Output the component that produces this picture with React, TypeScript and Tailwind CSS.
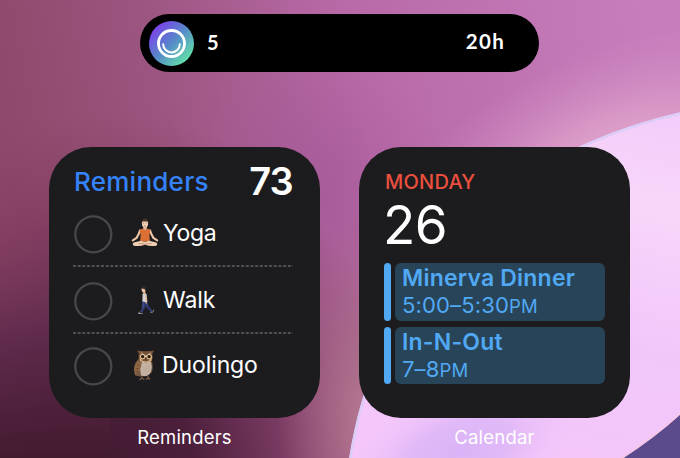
import type { ReactNode } from "react";

function Wallpaper() {
  return (
    <svg className="absolute inset-0 h-full w-full" viewBox="0 0 680 458" preserveAspectRatio="none" aria-hidden="true">
      <defs>
        <linearGradient id="base" gradientUnits="userSpaceOnUse" x1="0" y1="130" x2="640" y2="0">
          <stop offset="0" stopColor="#8e4869" />
          <stop offset="0.25" stopColor="#9c5580" />
          <stop offset="0.55" stopColor="#b869a7" />
          <stop offset="1" stopColor="#c67dbc" />
        </linearGradient>
        <radialGradient id="shade" gradientUnits="userSpaceOnUse" cx="0" cy="0" r="1" gradientTransform="translate(110 490) scale(300 380)">
          <stop offset="0" stopColor="#401a2e" />
          <stop offset="0.3" stopColor="#481d38" stopOpacity="0.95" />
          <stop offset="0.5" stopColor="#5f294b" stopOpacity="0.8" />
          <stop offset="0.75" stopColor="#783459" stopOpacity="0.5" />
          <stop offset="1" stopColor="#83405f" stopOpacity="0" />
        </radialGradient>
        <linearGradient id="corner" gradientUnits="userSpaceOnUse" x1="0" y1="458" x2="0" y2="230">
          <stop offset="0" stopColor="#431b2f" />
          <stop offset="0.5" stopColor="#5c284a" stopOpacity="0.75" />
          <stop offset="1" stopColor="#7f3d60" stopOpacity="0" />
        </linearGradient>
        <radialGradient id="pink" gradientUnits="userSpaceOnUse" cx="0" cy="0" r="1" gradientTransform="translate(620 165) rotate(-20) scale(230 120)">
          <stop offset="0" stopColor="#e6acd0" />
          <stop offset="0.4" stopColor="#dfa2cb" stopOpacity="0.75" />
          <stop offset="1" stopColor="#d18fc3" stopOpacity="0" />
        </radialGradient>
        <radialGradient id="violet" gradientUnits="userSpaceOnUse" cx="310" cy="190" r="140">
          <stop offset="0" stopColor="#a25698" stopOpacity="0.6" />
          <stop offset="1" stopColor="#a25698" stopOpacity="0" />
        </radialGradient>
        <radialGradient id="dusk" gradientUnits="userSpaceOnUse" cx="0" cy="0" r="1" gradientTransform="translate(368 420) scale(90 210)">
          <stop offset="0" stopColor="#b77a92" />
          <stop offset="0.4" stopColor="#a96d88" stopOpacity="0.75" />
          <stop offset="1" stopColor="#9d6085" stopOpacity="0" />
        </radialGradient>
        <linearGradient id="orb" gradientUnits="userSpaceOnUse" x1="640" y1="110" x2="560" y2="458">
          <stop offset="0" stopColor="#f3cdfa" />
          <stop offset="0.25" stopColor="#f8d6fa" />
          <stop offset="0.65" stopColor="#f1c7fa" />
          <stop offset="1" stopColor="#f4c6fa" />
        </linearGradient>
        <radialGradient id="lilac" gradientUnits="userSpaceOnUse" cx="0" cy="0" r="1" gradientTransform="translate(460 450) rotate(-20) scale(120 62)">
          <stop offset="0" stopColor="#d9b3f6" />
          <stop offset="0.45" stopColor="#dcb6f7" stopOpacity="0.8" />
          <stop offset="1" stopColor="#efc4fa" stopOpacity="0" />
        </radialGradient>
      </defs>
      <rect width="680" height="458" fill="url(#base)" />
      <rect width="680" height="458" fill="url(#violet)" />
      <rect width="680" height="458" fill="url(#pink)" />
      <rect width="680" height="458" fill="url(#shade)" />
      <rect width="110" height="458" fill="url(#corner)" />
      <rect width="680" height="458" fill="url(#dusk)" />
      <path d="M349 460C372 310 470 160 682 112V460Z" fill="url(#orb)" />
      <path d="M349 460C372 310 470 160 682 112V460Z" fill="url(#lilac)" />
      <path d="M350 460C373 310 471 161 682 113" fill="none" stroke="#dccdf8" strokeWidth="2.5" />
      <path d="M620 460Q655 438 682 413V460Z" fill="#5b4b8c" />
      <path d="M619 460Q654 438 682 412" fill="none" stroke="#f5c6e2" strokeWidth="1.500" />
    </svg>
  );
}

function YogaIcon() {
  return (
    <svg className="h-[30px] w-[30px]" viewBox="0 0 30 30" aria-hidden="true">
      <path d="M10 12.500Q8.500 17 6.600 19.800L2.800 22.300M20 12.500Q21.500 17 23.400 19.800L27.200 22.300" fill="none" stroke="#efc6a6" strokeWidth="2.200" strokeLinecap="round" strokeLinejoin="round" />
      <path d="M13.200 8h3.600v4h-3.600z" fill="#dcaf90" />
      <path d="M12.500 10.500 9.800 12q-.4 2 .8 4.600l-.4 6.900h9.600l-.4-6.900q1.200-2.600.8-4.600l-2.700-1.500Q15 13.500 12.500 10.500Z" fill="#dc7034" />
      <path d="M11 22.800 3.800 24.500q-2 1.800 0 3.200 6 1 11.200-1 5.200 2 11.200 1 2-1.400 0-3.200L19 22.800q-4 1.800-8 0Z" fill="#f1cfb3" />
      <path d="m8.500 25.400 6.500.8 6.500-.8" fill="none" stroke="#bd8866" strokeWidth=".8" />
      <ellipse cx="15" cy="5.500" rx="3.100" ry="4.100" fill="#f3d1b6" />
      <path d="M11.800 5Q11.300.5 15 .5T18.200 5l-.8-1.800q-2.400.4-4.800 0Z" fill="#443129" />
      <path d="M13.200 5.300h.9M15.900 5.300h.9M14.200 7.900h1.600" stroke="#77493c" strokeWidth=".6" />
    </svg>
  );
}

function WalkIcon() {
  return (
    <svg className="h-[30px] w-[30px]" viewBox="0 0 30 30" aria-hidden="true">
      <path d="M12.300 16h4.900l.8 4.300 4.600 5.500-1.700 1.400-5.200-5.600-.9 1.600-2.400 4.500-2-.8 1.300-4.300Z" fill="#30396f" />
      <path d="m13.300 18-.4 4.700M17 18.500l.5 2" stroke="#4957a0" strokeWidth=".9" fill="none" />
      <path d="m10 27-1.800 1.500h4M20.800 27.300l1.900-.1 1-2" fill="none" stroke="#8d9097" strokeWidth="1" strokeLinecap="round" />
      <path d="M12.600 8.600q2.400-1.300 3.900.5l.8 7.300q-2.300 1.200-4.900.2Z" fill="#d5d5d7" />
      <path d="m15.800 11 .7 4.200-.3 2.600" fill="none" stroke="#dfb697" strokeWidth="1.400" strokeLinecap="round" />
      <path d="M12.800 5.500h2.500v3.700h-1.500z" fill="#dba886" />
      <ellipse cx="13.700" cy="4.600" rx="2.100" ry="2.800" fill="#edc5a6" />
      <path d="M11.500 3.500Q12 .7 14.500 1q2.800.6 1.800 4.100l-1.100 1.200-.5-2.200Z" fill="#302724" />
    </svg>
  );
}

function OwlIcon() {
  return (
    <svg className="h-[32px] w-[30px]" viewBox="0 0 30 32" aria-hidden="true">
      <path d="M8.500 10Q3.800 15 4 20l1.300 6.500 4.200 1L21.500 24q2.800-7-.8-14Z" fill="#765a45" />
      <path d="M12 13q-3 7-.8 13.500 5.200 2 8.500-1.500 3.500-6 1-12.500Z" fill="#c3b2a2" />
      <path d="M7.600 12Q3 18 4.900 26q6.300-4 6.800-13Z" fill="#8e6843" />
      <path d="m7.500 16 2 .7m-3.200 2.800 2.500.5m-3 2.500 2.200.4" stroke="#5c402d" strokeWidth=".8" />
      <path d="M14 17v7m2.500-7v8m2.200-8v6" stroke="#aa9583" strokeWidth=".5" strokeDasharray="1.200 1.200" />
      <path d="M7 1.500q4 .8 8.700.8 4.800 0 8.500-.8l-2 3.600q1.500 6-1.700 7.500-5.200 2-9.800-.8-3.200-2.300-1.700-7.100Z" fill="#765238" />
      <path d="m10.500 3 5.500 3.800L21.500 3l-4.300 5.800h-2.400Z" fill="#dfd2c1" />
      <path d="M9.300 9Q15.700 16 22 9l-.8 3q-5.500 3-10.900 0Z" fill="#d8b489" />
      <circle cx="12.400" cy="7.700" r="2.700" fill="#deb987" />
      <circle cx="19.300" cy="7.700" r="2.700" fill="#deb987" />
      <circle cx="12.600" cy="7.600" r="1.600" fill="#20170f" />
      <circle cx="19.100" cy="7.600" r="1.600" fill="#20170f" />
      <path d="m15 8.300.9 3 .9-3Z" fill="#493d31" />
      <path d="M12 27v2.700m-2.600.9 2.600-1.300 2.300 1.200M18 26.700v2.800m-2.200 1 2.200-1.300 2.300 1" fill="none" stroke="#896346" strokeWidth="1.200" />
    </svg>
  );
}

function StatusPill() {
  return (
    <header className="ml-[140px] flex h-[58px] w-[399px] items-center rounded-full bg-black pl-[9px] pr-[34px] font-['Lato',sans-serif] text-[20px] font-bold leading-none text-white">
      <svg className="h-[45px] w-[45px]" viewBox="0 0 45 45" aria-hidden="true">
        <defs>
          <linearGradient id="badge" x1=".12" y1=".12" x2=".88" y2=".88">
            <stop offset="0" stopColor="#7d3eeb" />
            <stop offset=".5" stopColor="#568bc9" />
            <stop offset="1" stopColor="#62e4a8" />
          </linearGradient>
        </defs>
        <circle cx="22.500" cy="22.500" r="22.500" fill="url(#badge)" />
        <circle cx="22.500" cy="22.500" r="13" fill="none" stroke="#fff" strokeWidth="2.800" />
        <path d="M14.200 23.200a8.300 8.300 0 0 0 16.600 0" fill="none" stroke="#fff" strokeWidth="2" strokeLinecap="round" />
      </svg>
      <span className="-mt-[3px] ml-[13px]">5</span>
      <span className="-mt-[3px] ml-auto text-[20.500px] tracking-[1.300px]">20h</span>
    </header>
  );
}

function Reminder({ icon, label, className, labelClassName }: { icon: ReactNode; label: string; className: string; labelClassName: string }) {
  return (
    <li className={`flex items-center ${className}`}>
      <svg className="ml-px h-[39px] w-[39px] shrink-0" viewBox="0 0 39 39" aria-hidden="true">
        <circle cx="19.300" cy="19.300" r="18" fill="none" stroke="#48484a" strokeWidth="2.300" />
      </svg>
      <span className="-mt-[3px] ml-[17px] flex items-center">
        {icon}
        <span className={`text-[23px] leading-[28px] text-white ${labelClassName}`}>{label}</span>
      </span>
    </li>
  );
}

function Divider() {
  return (
    <svg className="block h-[2px] w-[220px]" viewBox="0 0 220 2" aria-hidden="true">
      <path d="M0 1h220" stroke="#505052" strokeWidth="2" strokeDasharray="3 1.670" />
    </svg>
  );
}

function RemindersWidget() {
  return (
    <section className="h-[271px] w-[271px] rounded-[42px] bg-[#1c1c1e] pl-[24px] pr-[27px] pt-[14px]">
      <div className="flex h-[40px] items-center justify-between">
        <h2 className="mt-[2px] pl-px text-[26px] font-medium leading-none tracking-[0.250px] text-[#3583fb]">Reminders</h2>
        <span className="-mt-[1px] text-[38px] font-semibold leading-none tracking-[-0.800px] text-white">73</span>
      </div>
      <ul>
        <Reminder icon={<YogaIcon />} label="Yoga" className="h-[64px] pt-[2px]" labelClassName="ml-[3px] tracking-[-0.350px]" />
        <Divider />
        <Reminder icon={<WalkIcon />} label="Walk" className="h-[65px] pt-[3px]" labelClassName="ml-[3px] tracking-[-0.100px]" />
        <Divider />
        <Reminder icon={<OwlIcon />} label="Duolingo" className="h-[65px]" labelClassName="ml-[2px] tracking-[-0.100px]" />
      </ul>
    </section>
  );
}

function Event({ title, time }: { title: string; time: string }) {
  return (
    <div className="flex h-[57.5px] gap-[4px] text-[#51a9f3]">
      <div className="w-[7px] rounded-full bg-[#51a9f3]" />
      <div className="h-full w-[210px] rounded-[6px] bg-[#284459] pl-[7px] pt-[2px]">
        <h3 className="whitespace-nowrap text-[23px] font-semibold leading-[27px] tracking-[0.200px]">{title}</h3>
        <p className="whitespace-nowrap text-[22px] leading-[26px] tracking-[0.150px]">
          {time}<span className="text-[18.500px]">PM</span>
        </p>
      </div>
    </div>
  );
}

function CalendarWidget() {
  return (
    <section className="h-[271px] w-[271px] rounded-[42px] bg-[#1c1c1e] pl-[25px] pt-[25px]">
      <h2 className="-mt-px pl-px text-[20px] font-medium leading-[22px] tracking-[0.250px] text-[#eb4f3d]">MONDAY</h2>
      <p className="-ml-px mt-[4px] h-[66px] text-[53px] font-normal leading-[56px] tracking-[-0.500px] text-white">26</p>
      <div className="flex flex-col gap-[6px]">
        <Event title="Minerva Dinner" time="5:00–5:30" />
        <Event title="In-N-Out" time="7–8" />
      </div>
    </section>
  );
}

function Labelled({ label, children }: { label: string; children: ReactNode }) {
  return (
    <div className="flex flex-col items-center">
      {children}
      <span className="mt-[7px] text-[18.500px] leading-[24px] tracking-[0.200px] text-white">{label}</span>
    </div>
  );
}

export default function App() {
  return (
    <main className="relative h-[458px] w-[680px] overflow-hidden font-['Inter',sans-serif]">
      <Wallpaper />
      <div className="relative flex flex-col pt-[14px]">
        <StatusPill />
        <div className="mt-[75px] flex gap-[39px] pl-[49px]">
          <Labelled label="Reminders"><RemindersWidget /></Labelled>
          <Labelled label="Calendar"><CalendarWidget /></Labelled>
        </div>
      </div>
    </main>
  );
}
